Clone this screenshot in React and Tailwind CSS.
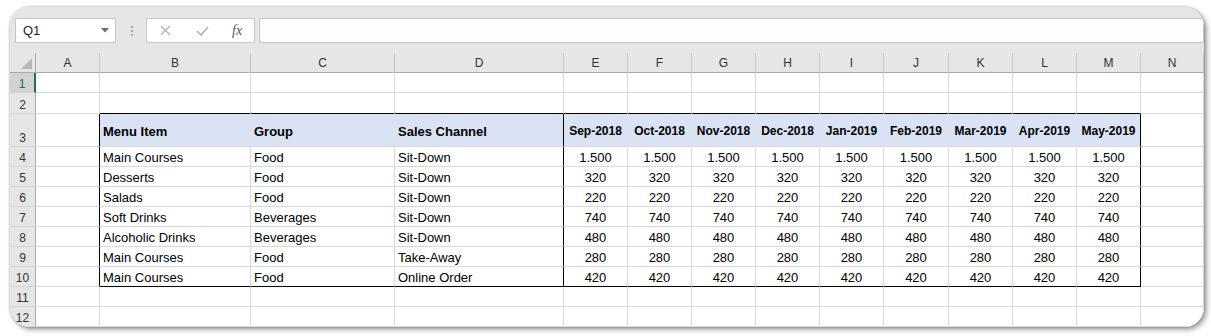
import React from 'react';

const cols = ['A', 'B', 'C', 'D', 'E', 'F', 'G', 'H', 'I', 'J', 'K', 'L', 'M', 'N'];
const months = ['Sep-2018', 'Oct-2018', 'Nov-2018', 'Dec-2018', 'Jan-2019', 'Feb-2019', 'Mar-2019', 'Apr-2019', 'May-2019'];
const rowHeights = { 1: 'h-[20px]', 2: 'h-[21px]', 3: 'h-[33px]' };

const sales = [
  ['Main Courses', 'Food', 'Sit-Down', '1.500'],
  ['Desserts', 'Food', 'Sit-Down', '320'],
  ['Salads', 'Food', 'Sit-Down', '220'],
  ['Soft Drinks', 'Beverages', 'Sit-Down', '740'],
  ['Alcoholic Drinks', 'Beverages', 'Sit-Down', '480'],
  ['Main Courses', 'Food', 'Take-Away', '280'],
  ['Main Courses', 'Food', 'Online Order', '420'],
];

const inTableCols = (c) => c !== 'A' && c !== 'N';

const cellText = (r, c) => {
  if (r === 3) {
    if (c === 'B') return 'Menu Item';
    if (c === 'C') return 'Group';
    if (c === 'D') return 'Sales Channel';
    if (inTableCols(c)) return months[cols.indexOf(c) - 4];
    return '';
  }
  if (r >= 4 && r <= 10) {
    const row = sales[r - 4];
    if (c === 'B') return row[0];
    if (c === 'C') return row[1];
    if (c === 'D') return row[2];
    if (inTableCols(c)) return row[3];
  }
  return '';
};

const Cell = ({ r, c }) => {
  const bodyRow = r >= 3 && r <= 10;
  const header = r === 3 && inTableCols(c);
  const textCol = c === 'B' || c === 'C' || c === 'D';

  let right = 'border-r-[#d9d9d9]';
  if (bodyRow && (c === 'A' || c === 'D' || c === 'M')) right = 'border-r-black';
  else if (header) right = 'border-r-[#dae3f3]';

  const bottom = (r === 2 || r === 10) && inTableCols(c) ? 'border-b-black' : 'border-b-[#d9d9d9]';

  let text = 'text-[13px]';
  if (header && textCol) text = 'text-[13px] font-bold';
  else if (header) text = 'text-[12px] font-bold';

  return (
    <div
      className={`flex items-center pt-[2px] border-r border-b ${right} ${bottom} ${header ? 'bg-[#dae3f3]' : 'bg-white'} ${
        textCol ? 'justify-start pl-[3px]' : 'justify-center'
      } ${text} text-black whitespace-nowrap overflow-hidden leading-none`}
    >
      {cellText(r, c)}
    </div>
  );
};

const Toolbar = () => (
  <div className="flex items-start h-[46px] pt-[11px] pl-[5px] bg-[#e6e6e6]">
    <div className="flex items-center justify-between w-[101px] h-[25px] bg-white border border-[#c6c6c6] pl-[7px] pr-[6px] text-[13px] text-[#222]">
      <span>Q1</span>
      <svg width="8" height="5" viewBox="0 0 8 5">
        <path d="M0 0 L8 0 L4 4.5 Z" fill="#6b6b6b" />
      </svg>
    </div>
    <div className="flex flex-col gap-[2px] h-[25px] justify-center ml-[15px] mr-[13px]">
      <span className="block w-[2px] h-[2px] bg-[#a6a6a6]" />
      <span className="block w-[2px] h-[2px] bg-[#a6a6a6]" />
      <span className="block w-[2px] h-[2px] bg-[#a6a6a6]" />
    </div>
    <div className="flex items-center w-[109px] h-[25px] bg-white border border-[#c6c6c6]">
      <svg className="ml-[13px]" width="11" height="11" viewBox="0 0 11 11">
        <path d="M1 1 L10 10 M10 1 L1 10" stroke="#b0b0b0" strokeWidth="1.2" />
      </svg>
      <svg className="ml-[25px]" width="13" height="10" viewBox="0 0 13 10">
        <path d="M1 5 L5 9 L12 1" stroke="#b0b0b0" strokeWidth="1.6" fill="none" />
      </svg>
      <span className="ml-[23px] text-[14px] italic text-[#555]" style={{ fontFamily: '"Liberation Serif", serif' }}>
        fx
      </span>
    </div>
    <div className="flex-1 ml-[4px] h-[25px] bg-[#fdfdfd] border border-[#c6c6c6]" />
  </div>
);

export default function App() {
  const rows = Array.from({ length: 12 }, (_, i) => i + 1);

  return (
    <div className="min-h-screen bg-white pt-[7px] pl-[10px]" style={{ fontFamily: '"Liberation Sans", Arial, sans-serif' }}>
      <div className="w-[1194px] h-[320px] rounded-[20px] overflow-hidden bg-white shadow-[0_0_3px_rgba(0,0,0,0.35),3px_3px_5px_rgba(0,0,0,0.35)]">
        <Toolbar />
        <div className="grid grid-cols-[26px_64px_151px_144px_169px_64px_64px_64px_64px_64px_65px_64px_64px_64px_63px]">
          {/* column header */}
          <div className="relative h-[20px] bg-[#e6e6e6] border-r border-b border-[#ababab]">
            <svg className="absolute right-[3px] bottom-[3px]" width="11" height="11" viewBox="0 0 11 11">
              <path d="M11 0 L11 11 L0 11 Z" fill="#b9b9b9" />
            </svg>
          </div>
          {cols.map((c) => (
            <div
              key={c}
              className="flex items-center justify-center h-[20px] bg-[#e6e6e6] border-r border-r-[#c4c4c4] border-b border-b-[#ababab] text-[12px] text-[#333]"
            >
              {c}
            </div>
          ))}

          {rows.map((r) => (
            <React.Fragment key={r}>
              <div
                className={`flex items-end justify-center pb-[2px] ${rowHeights[r] || 'h-[20px]'} border-b border-b-[#d4d4d4] text-[12px] leading-none ${
                  r === 1
                    ? 'bg-[#d2d2d2] border-r-2 border-r-[#217346] text-[#2d6a4f]'
                    : 'bg-[#e6e6e6] border-r border-r-[#ababab] text-[#333]'
                }`}
              >
                {r}
              </div>
              {cols.map((c) => (
                <Cell key={c} r={r} c={c} />
              ))}
            </React.Fragment>
          ))}
        </div>
      </div>
    </div>
  );
}
